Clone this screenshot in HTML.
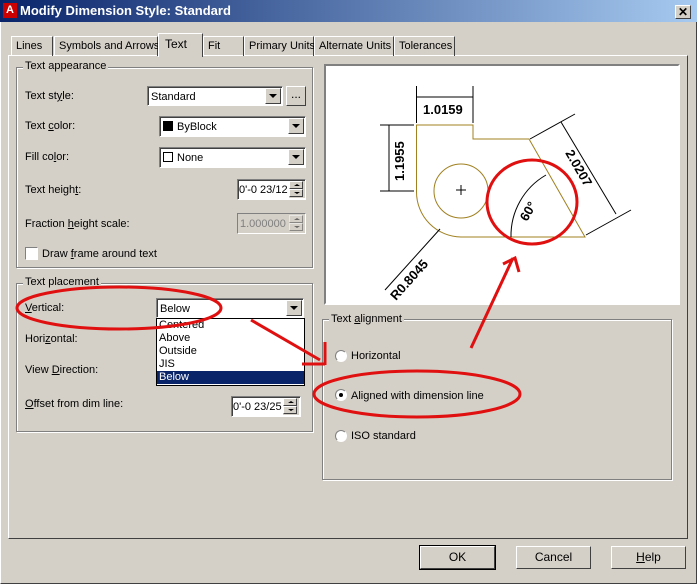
<!DOCTYPE html>
<html><head><style>
*{box-sizing:border-box;margin:0;padding:0}
body{width:697px;height:584px;background:#d4d0c8;font-family:"Liberation Sans",Arial,sans-serif;font-size:11px;color:#000;position:relative;overflow:hidden}
.a{position:absolute}
.title{left:0;top:0;width:697px;height:22px;background:linear-gradient(90deg,#0a246a,#a6caf0);color:#fff;font-weight:bold;font-size:13px;line-height:22px;padding-left:20px}
.outer{left:0;top:0;width:697px;height:584px;border:1px solid #fff;border-right-color:#404040;border-bottom-color:#404040}
.tab{top:36px;height:20px;border:1px solid #fff;border-right-color:#404040;border-bottom:none;padding:3px 0 0 4px;white-space:nowrap}
.panel{left:8px;top:55px;width:680px;height:484px;border:1px solid #fff;border-right-color:#404040;border-bottom-color:#404040}
.grp{border:1px solid #808080;box-shadow:1px 1px 0 #fff,inset 1px 1px 0 #fff}
.leg{background:#d4d0c8;padding:0 2px}
.inp{background:#fff;border:1px solid #808080;border-right-color:#fff;border-bottom-color:#fff;box-shadow:inset 1px 1px 0 #404040;padding:4px 3px 0;white-space:nowrap;overflow:hidden}
.dd{width:16px;height:16px;background:#d4d0c8;border:1px solid #fff;border-right-color:#404040;border-bottom-color:#404040}
.dd:after{content:"";position:absolute;left:3px;top:5px;border:4px solid transparent;border-top:4px solid #000;border-bottom:none}
.spin{width:16px;background:#d4d0c8}
.sp{position:absolute;left:0;width:14px;height:8px;border:1px solid #fff;border-right-color:#404040;border-bottom-color:#404040}
.sp:after{content:"";position:absolute;left:4px;top:2px;border:3px solid transparent}
.up:after{border-bottom:2px solid #000;border-top:none}
.dn:after{border-top:2px solid #000;border-bottom:none}
.btn{background:#d4d0c8;border:1px solid #fff;border-right-color:#404040;border-bottom-color:#404040;text-align:center;line-height:21px;font-size:12px}
.rad{width:12px;height:12px;border-radius:50%;background:#fff;border:1px solid #808080;border-right-color:#fff;border-bottom-color:#fff}
u{text-decoration:underline}
</style></head><body>
<div class="a outer"></div>
<div class="a title">Modify Dimension Style: Standard</div>
<div class="a" style="left:3px;top:3px;width:14px;height:15px;background:#c00;color:#fff;font-size:11px;font-weight:bold;line-height:14px;text-align:center">A</div>
<div class="a btn" style="left:675px;top:5px;width:16px;height:14px;line-height:12px;font-size:12px;font-weight:bold">✕</div>

<div class="a panel"></div>
<div class="a tab" style="left:11px;width:42px">Lines</div>
<div class="a tab" style="left:54px;width:104px">Symbols and Arrows</div>
<div class="a tab" style="left:203px;width:41px">Fit</div>
<div class="a tab" style="left:244px;width:70px">Primary Units</div>
<div class="a tab" style="left:314px;width:80px">Alternate Units</div>
<div class="a tab" style="left:394px;width:61px">Tolerances</div>
<div class="a tab" style="left:158px;top:33px;width:45px;height:24px;background:#d4d0c8;padding-top:3px;padding-left:6px;font-size:12px">Text</div>

<div class="a grp" style="left:16px;top:67px;width:297px;height:201px"></div>
<div class="a leg" style="left:23px;top:60px">Text appearance</div>
<div class="a" style="left:25px;top:90px">Text st<u>y</u>le:</div>
<div class="a inp" style="left:147px;top:86px;width:136px;height:20px">Standard</div>
<div class="a dd" style="left:265px;top:88px"></div>
<div class="a btn" style="left:286px;top:86px;width:20px;height:20px;line-height:14px">...</div>
<div class="a" style="left:25px;top:120px">Text <u>c</u>olor:</div>
<div class="a inp" style="left:159px;top:116px;width:147px;height:21px"><span style="display:inline-block;width:10px;height:10px;background:#000;vertical-align:-1px;margin-right:4px"></span>ByBlock</div>
<div class="a dd" style="left:288px;top:118px"></div>
<div class="a" style="left:25px;top:151px">Fill co<u>l</u>or:</div>
<div class="a inp" style="left:159px;top:147px;width:147px;height:21px"><span style="display:inline-block;width:10px;height:10px;border:1px solid #000;vertical-align:-1px;margin-right:4px"></span>None</div>
<div class="a dd" style="left:288px;top:149px"></div>
<div class="a" style="left:25px;top:184px">Text heigh<u>t</u>:</div>
<div class="a inp" style="left:237px;top:179px;width:69px;height:21px;padding-left:1px">0'-0 23/12</div>
<div class="a spin" style="left:289px;top:181px;height:17px"><div class="sp up" style="top:0"></div><div class="sp dn" style="top:8px"></div></div>
<div class="a" style="left:25px;top:218px">Fraction <u>h</u>eight scale:</div>
<div class="a" style="left:237px;top:213px;width:69px;height:21px;border:1px solid #808080;border-right-color:#fff;border-bottom-color:#fff;color:#808080;padding:4px 2px">1.000000</div>
<div class="a spin" style="left:289px;top:215px;height:17px;opacity:.5"><div class="sp up" style="top:0"></div><div class="sp dn" style="top:8px"></div></div>
<div class="a" style="left:25px;top:247px;width:13px;height:13px;background:#fff;border:1px solid #808080;border-right-color:#fff;border-bottom-color:#fff"></div>
<div class="a" style="left:42px;top:248px">Draw <u>f</u>rame around text</div>

<div class="a grp" style="left:16px;top:283px;width:297px;height:149px"></div>
<div class="a leg" style="left:23px;top:276px">Text placement</div>
<div class="a" style="left:25px;top:302px"><u>V</u>ertical:</div>
<div class="a inp" style="left:156px;top:298px;width:148px;height:20px">Below</div>
<div class="a dd" style="left:286px;top:300px"></div>
<div class="a" style="left:25px;top:333px">Hori<u>z</u>ontal:</div>
<div class="a" style="left:25px;top:364px">View <u>D</u>irection:</div>
<div class="a" style="left:25px;top:398px"><u>O</u>ffset from dim line:</div>
<div class="a" style="left:156px;top:318px;width:149px;height:68px;background:#fff;border:1px solid #000;line-height:13px;font-size:11px">
<div style="padding-left:2px">Centered</div><div style="padding-left:2px">Above</div><div style="padding-left:2px">Outside</div><div style="padding-left:2px">JIS</div><div style="padding-left:2px;background:#0a246a;color:#fff">Below</div></div>
<div class="a inp" style="left:231px;top:396px;width:70px;height:21px;padding-left:1px">0'-0 23/25</div>
<div class="a spin" style="left:283px;top:398px;height:17px"><div class="sp up" style="top:0"></div><div class="sp dn" style="top:8px"></div></div>

<div class="a" style="left:324px;top:64px;width:356px;height:241px;background:#fff;border:2px solid #808080;border-right-color:#fff;border-bottom-color:#fff"></div>

<div class="a grp" style="left:322px;top:319px;width:350px;height:161px"></div>
<div class="a leg" style="left:329px;top:313px">Text <u>a</u>lignment</div>
<div class="a rad" style="left:335px;top:350px"></div>
<div class="a" style="left:351px;top:350px">Horizontal</div>
<div class="a rad" style="left:335px;top:389px"></div>
<div class="a" style="left:339px;top:393px;width:4px;height:4px;background:#000;border-radius:50%"></div>
<div class="a" style="left:351px;top:390px">Aligned with dimension line</div>
<div class="a rad" style="left:335px;top:430px"></div>
<div class="a" style="left:351px;top:430px">ISO standard</div>

<div class="a btn" style="left:420px;top:546px;width:75px;height:23px;outline:1px solid #000">OK</div>
<div class="a btn" style="left:516px;top:546px;width:75px;height:23px">Cancel</div>
<div class="a btn" style="left:611px;top:546px;width:75px;height:23px"><u>H</u>elp</div>

<svg class="a" style="left:0;top:0" width="697" height="584" font-family="Liberation Sans,Arial,sans-serif">
<g fill="none" stroke="#a08020" stroke-width="1">
<path d="M416.5 125 H473 V139 H529 L585 237 H461 A45 45 0 0 1 416.5 192 Z"/>
<circle cx="461" cy="191" r="27"/>
</g>
<g stroke="#000" stroke-width="1" fill="none">
<path d="M456 190h10M461 185v10"/>
<path d="M416.5 123V86M473 123V86M417 97h56"/>
<path d="M414 125H380M414 191H380M389 125v66"/>
<path d="M530 139l45-25M586 235l45-25M561 122l55 92"/>
<path d="M385 290l55-61"/>
<path d="M511 237 A70 70 0 0 1 546 175"/>
</g>
<text x="423" y="114" font-size="13" font-weight="bold">1.0159</text>
<text transform="translate(404,181) rotate(-90)" font-size="13" font-weight="bold">1.1955</text>
<text transform="translate(565,153) rotate(60)" font-size="13" font-weight="bold">2.0207</text>
<text transform="translate(527,222) rotate(-60)" font-size="13" font-weight="bold">60°</text>
<text transform="translate(396,301) rotate(-48)" font-size="13" font-weight="bold">R0.8045</text>
<g fill="none" stroke="#e01010" stroke-width="3">
<ellipse cx="532" cy="202" rx="45" ry="42"/>
<ellipse cx="119" cy="308" rx="102" ry="21"/>
<ellipse cx="417" cy="394" rx="103" ry="23"/>
<path d="M251 320 L320 360 M325 342v23 M302 364h23"/>
<path d="M471 348 L513 258 M503 264l12-6 4 14"/>
</g>
</svg>
</body></html>
